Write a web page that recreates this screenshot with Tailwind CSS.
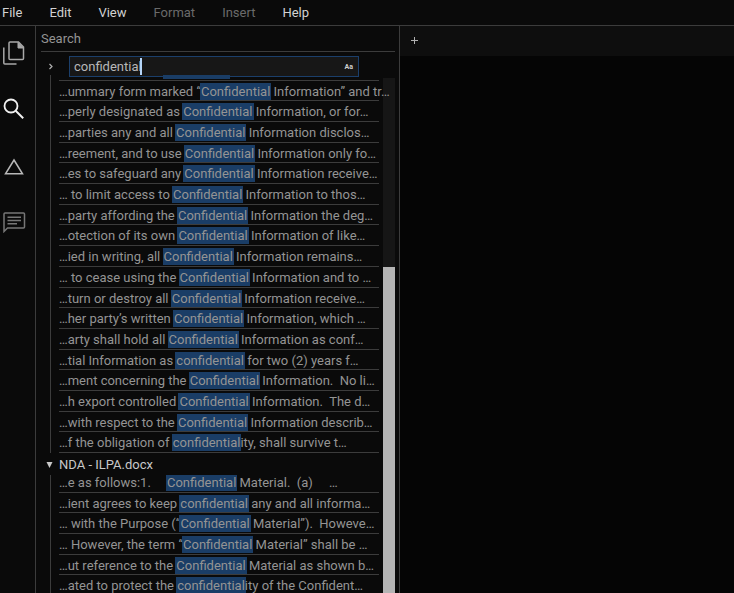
<!DOCTYPE html>
<html lang="en">

<head>
    <meta charset="UTF-8">
    <meta name="viewport" content="width=device-width, initial-scale=1.0">
    <title>Search</title>
    <script src="https://cdn.jsdelivr.net/npm/@tailwindcss/browser@4"></script>
</head>

<body class="flex h-screen flex-col overflow-hidden bg-[#0a0a0a] font-[Roboto,sans-serif] text-[13px] leading-5 text-[#949494]">
    <!-- Menu bar -->
    <nav class="flex h-[26px] shrink-0 items-center gap-[27px] border-b border-[#3c3c3c] pl-[2px] text-[#d2d2d2]">
        <button>File</button>
        <button>Edit</button>
        <button>View</button>
        <button class="text-[#6a6a6a]" disabled>Format</button>
        <button class="text-[#6a6a6a]" disabled>Insert</button>
        <button>Help</button>
    </nav>

    <div class="flex min-h-0 flex-1">
        <!-- Activity bar -->
        <aside class="flex w-9 shrink-0 flex-col items-start gap-8 border-r border-[#3c3c3c] pt-[15px] pl-[2px]">
            <button aria-label="Files">
                <svg class="size-6" viewBox="0 0 24 24" fill="none" stroke="#a8a8a8" stroke-width="1.5">
                    <path d="M8 1h8.500l5 5v11.500a1 1 0 0 1-1 1H8a1 1 0 0 1-1-1V2a1 1 0 0 1 1-1z" />
                    <path d="M16 1.500l5.500 5.500H16z" fill="#a8a8a8" stroke-width="1" />
                    <path d="M1.800 6.500V22a1 1 0 0 0 1 1H14.500" />
                </svg>
            </button>
            <button aria-label="Search">
                <svg class="size-6" viewBox="0 0 24 24" fill="none" stroke="#f2f2f2" stroke-width="1.8">
                    <circle cx="9" cy="9" r="6.500" />
                    <path d="M13.700 13.700l7.500 7.500" stroke-width="2" />
                </svg>
            </button>
            <button aria-label="Changes">
                <svg class="size-6" viewBox="0 0 24 24" fill="none" stroke="#b8b8b8" stroke-width="1.5">
                    <path d="M12 7L20.500 20.800H3.500z" />
                </svg>
            </button>
            <button aria-label="Comments">
                <svg class="size-6" viewBox="0 0 24 24" fill="none" stroke="#777" stroke-width="1.5">
                    <path d="M2 22.500V5a1 1 0 0 1 1-1h18.500a1 1 0 0 1 1 1v13a1 1 0 0 1-1 1H5.500z" />
                    <path d="M5.500 8.200h13.500M5.500 11.500h13.500M5.500 14.800h9.500" />
                </svg>
            </button>
        </aside>

        <!-- Search panel -->
        <section class="flex w-[364px] shrink-0 flex-col border-r border-[#3c3c3c] pr-1 pl-[5px]">
            <h2 class="h-[26px] shrink-0 border-b border-[#3c3c3c] pt-[3px]">Search</h2>

            <div class="mt-1 flex h-[21px] shrink-0 items-center pr-9">
                <button class="w-7 pl-[6px]" aria-label="Toggle replace">
                    <svg class="size-2" viewBox="0 0 8 8" fill="none" stroke="#b0b0b0" stroke-width="1.2">
                        <path d="M2.500 1l2.500 2.500-2.500 2.500" />
                    </svg>
                </button>
                <div class="relative flex-1">
                    <label for="query" class="sr-only">Search text</label>
                    <input id="query" type="text" value="confidential" class="h-[21px] w-full border border-[#1b3f6b] bg-[#171717] pl-1 text-[#b8b8b8] outline-none">
                    <span class="absolute top-[2px] left-[71px] h-[17px] w-[2px] bg-[#b5d5f8]"></span>
                    <button class="absolute top-1 right-[6px] text-[7px] leading-[14px] font-bold text-[#d0d0d0]" aria-label="Match case">Aa</button>
                </div>
            </div>

            <!-- Results -->
            <div class="relative -mt-[2px] flex min-h-0 flex-1 gap-1 overflow-hidden">
                <div class="relative z-10 -mt-[15px] min-w-0 flex-1 pl-[9px]">
                    <ul class="grid h-[393px] auto-rows-[minmax(0,1fr)] grid-cols-1 border-l border-[#3c3c3c] pl-2 leading-[21px] whitespace-pre [&_mark]:bg-[#1a3d66] [&_mark]:py-px [&_mark]:text-[#949494] [&_mark]:shadow-[1px_0_#1a3d66,-1px_0_#1a3d66] [&>li]:border-b [&>li]:border-[#3c3c3c]">
                        <li class="pl-[105px]"><mark class="block h-[19px] w-[65px]"></mark></li>
                        <li>…ummary form marked “<mark>Confidential</mark> Information” and tr…</li>
                        <li>…perly designated as <mark>Confidential</mark> Information, or for…</li>
                        <li>…parties any and all <mark>Confidential</mark> Information disclos…</li>
                        <li>…reement, and to use <mark>Confidential</mark> Information only fo…</li>
                        <li>…es to safeguard any <mark>Confidential</mark> Information receive…</li>
                        <li>… to limit access to <mark>Confidential</mark> Information to thos…</li>
                        <li>…party affording the <mark>Confidential</mark> Information the deg…</li>
                        <li>…otection of its own <mark>Confidential</mark> Information of like…</li>
                        <li>…ied in writing, all <mark>Confidential</mark> Information remains…</li>
                        <li>… to cease using the <mark>Confidential</mark> Information and to …</li>
                        <li>…turn or destroy all <mark>Confidential</mark> Information receive…</li>
                        <li>…her party’s written <mark>Confidential</mark> Information, which …</li>
                        <li>…arty shall hold all <mark>Confidential</mark> Information as conf…</li>
                        <li>…tial Information as <mark>confidential</mark> for two (2) years f…</li>
                        <li>…ment concerning the <mark>Confidential</mark> Information.  No li…</li>
                        <li>…h export controlled <mark>Confidential</mark> Information.  The d…</li>
                        <li>…with respect to the <mark>Confidential</mark> Information describ…</li>
                        <li>…f the obligation of <mark>confidential</mark>ity, shall survive t…</li>
                    </ul>

                    <h3 class="relative -mb-[3px] -ml-1 flex h-[22px] items-center bg-[#0a0a0a] pt-px text-[#c8c8c8]">
                        <button class="flex items-center gap-[6px]">
                            <svg class="h-[6px] w-[7px]" viewBox="0 0 7 6" fill="#c8c8c8">
                                <path d="M0.500 0h6L3.500 6z" />
                            </svg>
                            NDA - ILPA.docx
                        </button>
                    </h3>
                    <ul class="grid h-[124px] auto-rows-[minmax(0,1fr)] grid-cols-1 border-l border-[#3c3c3c] pl-2 leading-[21px] whitespace-pre [&_mark]:bg-[#1a3d66] [&_mark]:py-px [&_mark]:text-[#949494] [&_mark]:shadow-[1px_0_#1a3d66,-1px_0_#1a3d66] [&>li]:border-b [&>li]:border-[#3c3c3c]">
                        <li>…e as follows:1.     <mark>Confidential</mark> Material.  (a)     …</li>
                        <li>…ient agrees to keep <mark>confidential</mark> any and all informa…</li>
                        <li>… with the Purpose (“<mark>Confidential</mark> Material”).  Howeve…</li>
                        <li>… However, the term “<mark>Confidential</mark> Material” shall be …</li>
                        <li>…ut reference to the <mark>Confidential</mark> Material as shown b…</li>
                        <li>…ated to protect the <mark>confidential</mark>ity of the Confident…</li>
                    </ul>
                </div>
                <div class="mt-[3px] w-3 shrink-0 bg-[#161616]">
                    <div class="mt-[189px] h-full bg-[#b4b4b4]"></div>
                </div>
            </div>
        </section>

        <!-- Editor -->
        <main class="flex min-w-0 flex-1 flex-col bg-[#050505]">
            <div class="flex h-[30px] items-center bg-[#0e0e0e] pb-px pl-[11px]">
                <button aria-label="New tab">
                    <svg class="size-[7px]" viewBox="0 0 7 7" fill="none" stroke="#b0b0b0">
                        <path d="M3.500 0v7M0 3.500h7" />
                    </svg>
                </button>
            </div>
        </main>
    </div>
</body>

</html>
